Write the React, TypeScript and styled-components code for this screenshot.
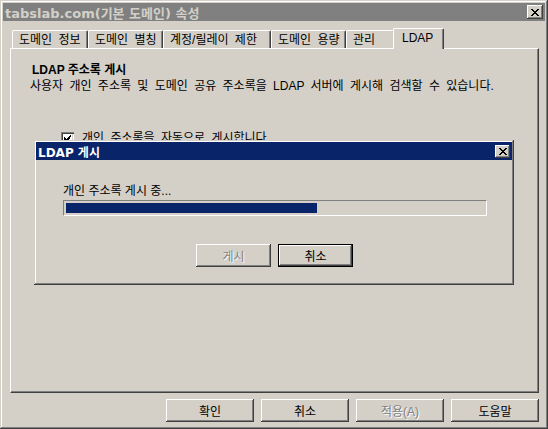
import styled, { createGlobalStyle, css } from "styled-components";

const GlobalStyle = createGlobalStyle`
  html, body {
    margin: 0;
    padding: 0;
    background: #d4d0c8;
  }
  body {
    font-family: "Liberation Sans", "Noto Sans CJK KR", sans-serif;
    font-size: 12px;
    color: #000;
    word-spacing: 3px;
  }
`;

const raised = css`
  box-shadow: inset -1px -1px #404040, inset 1px 1px #ffffff,
    inset -2px -2px #808080, inset 2px 2px #d4d0c8;
`;

const windowFrame = css`
  box-shadow: inset -1px -1px #404040, inset 1px 1px #d4d0c8,
    inset -2px -2px #808080, inset 2px 2px #ffffff;
`;

const Window = styled.div`
  position: relative;
  box-sizing: border-box;
  width: 548px;
  height: 429px;
  padding: 3px;
  background: #d4d0c8;
  display: flex;
  flex-direction: column;
  ${windowFrame}
`;

const TitleBar = styled.div<{ $active?: boolean }>`
  height: 18px;
  display: flex;
  align-items: center;
  justify-content: space-between;
  padding: 0 2px 0 2px;
  background: ${(p) => (p.$active ? "#0a246a" : "#808080")};
  color: ${(p) => (p.$active ? "#ffffff" : "#d4d0c8")};
  font-family: "DejaVu Sans", "Noto Sans CJK KR", sans-serif;
  font-weight: bold;
  font-size: ${(p) => (p.$active ? "12px" : "13px")};
  word-spacing: 0;
`;

const CloseButton = styled.div<{ $small?: boolean }>`
  width: ${(p) => (p.$small ? "15px" : "16px")};
  height: ${(p) => (p.$small ? "13px" : "14px")};
  background: #d4d0c8;
  display: flex;
  align-items: center;
  justify-content: center;
  ${raised}
`;

const Body = styled.div`
  flex: 1;
  display: flex;
  flex-direction: column;
  padding: 7px 6px 0 7px;
`;

const TabStrip = styled.div`
  display: flex;
  align-items: flex-end;
  height: 20px;
  padding-left: 2px;
  position: relative;
  z-index: 1;
`;

const Tab = styled.div<{ $w: number; $selected?: boolean }>`
  box-sizing: border-box;
  width: ${(p) => p.$w + (p.$selected ? 4 : 0)}px;
  height: ${(p) => (p.$selected ? 21 : 18)}px;
  margin: ${(p) => (p.$selected ? "0 -2px -1px -2px" : "0")};
  padding: ${(p) => (p.$selected ? "2px 0 0 8px" : "2px 0 0 6px")};
  background: #d4d0c8;
  border-top: 1px solid #ffffff;
  border-left: 1px solid #ffffff;
  border-right: 1px solid #404040;
  border-radius: 2px 2px 0 0;
  box-shadow: inset -1px 0 #808080;
  font-size: 12px;
  white-space: nowrap;
  line-height: 14px;
  position: relative;
  z-index: ${(p) => (p.$selected ? 2 : 0)};
`;

const Panel = styled.div`
  box-sizing: border-box;
  height: 345px;
  border-top: 1px solid #ffffff;
  border-left: 1px solid #ffffff;
  border-right: 1px solid #404040;
  border-bottom: 1px solid #404040;
  box-shadow: inset -1px -1px #808080;
  padding: 13px 0 0 21px;
`;

const Heading = styled.div`
  font-weight: bold;
  font-size: 12px;
  line-height: 16px;
  word-spacing: 0;
`;

const Description = styled.div`
  font-size: 12px;
  line-height: 16px;
  margin-left: -2px;
`;

const CheckRow = styled.div`
  display: flex;
  align-items: center;
  gap: 8px;
  margin: 38px 0 0 29px;
  font-size: 12px;
  line-height: 13px;
`;

const CheckBox = styled.div`
  box-sizing: border-box;
  width: 13px;
  height: 13px;
  background: #ffffff;
  box-shadow: inset 1px 1px #808080, inset 2px 2px #404040,
    inset -1px -1px #ffffff, inset -2px -2px #d4d0c8;
  display: flex;
  align-items: center;
  justify-content: center;
`;

const ButtonRow = styled.div`
  display: flex;
  justify-content: flex-end;
  gap: 7px;
  margin-top: 6px;
`;

const Button = styled.div<{ $w: number; $disabled?: boolean; $default?: boolean }>`
  box-sizing: border-box;
  display: flex;
  align-items: center;
  justify-content: center;
  background: #d4d0c8;
  font-size: 12px;
  color: ${(p) => (p.$disabled ? "#808080" : "#000")};
  text-shadow: ${(p) => (p.$disabled ? "1px 1px 0 #ffffff" : "none")};
  border: 1px solid ${(p) => (p.$default ? "#000" : "transparent")};
  margin: ${(p) => (p.$default ? "0" : "-1px")};
  width: ${(p) => p.$w + (p.$default ? 0 : 2)}px;
  height: ${(p) => (p.$default ? 23 : 25)}px;
  background-clip: padding-box;
  box-shadow: inset -1px -1px #404040, inset 1px 1px #ffffff,
    inset -2px -2px #808080;
`;

const Dialog = styled.div`
  position: absolute;
  left: 34px;
  top: 140px;
  box-sizing: border-box;
  width: 480px;
  height: 145px;
  padding: 2px;
  background: #d4d0c8;
  display: flex;
  flex-direction: column;
  ${windowFrame}
`;

const DialogBody = styled.div`
  flex: 1;
  padding: 23px 0 0 27px;
  display: flex;
  flex-direction: column;
`;

const Status = styled.div`
  font-size: 12px;
  line-height: 16px;
  word-spacing: 0;
`;

const Progress = styled.div`
  box-sizing: border-box;
  width: 424px;
  height: 16px;
  margin-top: 1px;
  padding: 2px;
  border-top: 1px solid #808080;
  border-left: 1px solid #808080;
  border-right: 1px solid #ffffff;
  border-bottom: 1px solid #ffffff;
`;

const ProgressFill = styled.div`
  height: 100%;
  background: #0a246a;
`;

const DialogButtons = styled.div`
  display: flex;
  gap: 7px;
  margin: 28px 0 0 133px;
`;

const XIcon = () => (
  <svg width="8" height="7" viewBox="0 0 8 7" shapeRendering="crispEdges">
    <path
      d="M0 0h2v1h-2zM6 0h2v1h-2zM1 1h2v1h-2zM5 1h2v1h-2zM2 2h4v1h-4zM3 3h2v1h-2zM2 4h4v1h-4zM1 5h2v1h-2zM5 5h2v1h-2zM0 6h2v1h-2zM6 6h2v1h-2z"
      fill="#000"
    />
  </svg>
);

const CheckMark = () => (
  <svg width="7" height="7" viewBox="0 0 7 7" shapeRendering="crispEdges">
    <path d="M6 0h1v1h-1zM5 1h2v1h-2zM0 2h1v1h-1zM4 2h2v1h-2zM0 3h2v1h-2zM3 3h3v1h-3zM0 4h5v1h-5zM1 5h3v1h-3zM2 6h1v1h-1z" fill="#000" />
  </svg>
);

const tabs = [
  { label: "도메인 정보", w: 76 },
  { label: "도메인 별칭", w: 75 },
  { label: "계정/릴레이 제한", w: 108 },
  { label: "도메인 용량", w: 75 },
  { label: "관리", w: 49 },
  { label: "LDAP", w: 47, selected: true },
];

export default function App() {
  const progress = 60;
  return (
    <>
      <GlobalStyle />
      <Window>
        <TitleBar>
          <span>tabslab.com(기본 도메인) 속성</span>
          <CloseButton>
            <XIcon />
          </CloseButton>
        </TitleBar>
        <Body>
          <TabStrip>
            {tabs.map((t) => (
              <Tab key={t.label} $w={t.w} $selected={t.selected}>
                {t.label}
              </Tab>
            ))}
          </TabStrip>
          <Panel>
            <Heading>LDAP 주소록 게시</Heading>
            <Description>
              사용자 개인 주소록 및 도메인 공유 주소록을 LDAP 서버에 게시해 검색할 수 있습니다.
            </Description>
            <CheckRow>
              <CheckBox>
                <CheckMark />
              </CheckBox>
              <span>개인 주소록을 자동으로 게시합니다.</span>
            </CheckRow>
          </Panel>
          <ButtonRow>
            <Button $w={88}>확인</Button>
            <Button $w={88}>취소</Button>
            <Button $w={88} $disabled>
              적용(A)
            </Button>
            <Button $w={88}>도움말</Button>
          </ButtonRow>
        </Body>

        <Dialog>
          <TitleBar $active>
            <span>LDAP 게시</span>
            <CloseButton $small>
              <XIcon />
            </CloseButton>
          </TitleBar>
          <DialogBody>
            <Status>개인 주소록 게시 중...</Status>
            <Progress>
              <ProgressFill style={{ width: `${progress}%` }} />
            </Progress>
            <DialogButtons>
              <Button $w={75} $disabled>
                게시
              </Button>
              <Button $w={75} $default>
                취소
              </Button>
            </DialogButtons>
          </DialogBody>
        </Dialog>
      </Window>
    </>
  );
}
